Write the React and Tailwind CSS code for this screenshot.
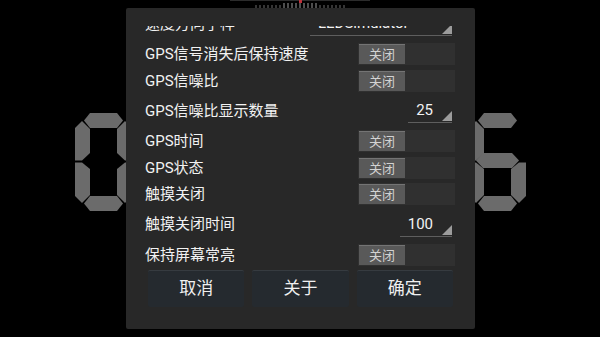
import React from "react";

const SEGMENTS = {
  a: "15,0 42,0 48,7.5 42,15 15,15 9,7.5",
  b: "57,15 50,8 42,16 42,40 50,47.5 57,47.5",
  c: "57,49.5 50,49.5 42,56 42,82 50,90 57,83",
  d: "15,83 42,83 48,90.5 42,98 15,98 9,90.5",
  e: "0,49.5 7,49.5 15,56 15,82 7,90 0,83",
  f: "0,15 7,8 15,16 15,40 7,47.5 0,47.5",
  g: "14,40 43,40 50,47.5 43,55 14,55 7,47.5",
};

const DIGITS = {
  0: ["a", "b", "c", "d", "e", "f"],
  6: ["a", "c", "d", "e", "f", "g"],
};

function Digit({ value, className }) {
  return (
    <svg className={className} width="57" height="98" viewBox="0 0 57 98">
      {DIGITS[value].map((s) => (
        <polygon key={s} points={SEGMENTS[s]} fill="#6b6b6b" />
      ))}
    </svg>
  );
}

function Ticks() {
  const ticks = [];
  for (let x = 256; x <= 344; x += 4) {
    const d = Math.abs(x - 300);
    ticks.push(
      <line key={x} x1={x} x2={x} y1={d < 20 ? 3 : 5} y2="8" stroke={d < 20 ? "#9a9a9a" : "#6a6a6a"} strokeWidth="1" />
    );
  }
  return (
    <svg className="absolute left-0 top-0" width="600" height="10">
      <rect x="230" y="0" width="140" height="1" fill="#2c2c2c" />
      {ticks}
      <rect x="299" y="0" width="3" height="3" fill="#c0303a" />
    </svg>
  );
}

function Toggle() {
  return (
    <div className="w-[97px] h-[22px] bg-[#303030] flex items-center pl-px">
      <div className="w-[46px] h-[20px] bg-[#595959] border-t border-[#747474] flex items-center justify-center text-[13px] leading-none text-[#d2d2d2]">
        关闭
      </div>
    </div>
  );
}

function ToggleRow({ label }) {
  return (
    <div className="flex items-center h-[26.5px] pl-[19px] pr-[20px]">
      <span className="flex-1 text-[15px] text-[#f2f2f2]">{label}</span>
      <Toggle />
    </div>
  );
}

function SpinnerRow({ label, value, width }) {
  return (
    <div className="flex items-center h-[34px] pl-[19px] pr-[23px]">
      <span className="flex-1 text-[15px] text-[#f2f2f2]">{label}</span>
      <div
        className={
          "relative h-[24px] flex items-center border-b border-[#5e5e5e] text-[15px] text-[#f2f2f2] " +
          (width ? "w-[142px] pl-[8px]" : "pl-[8px] pr-[19px]")
        }
      >
        {value}
        <svg className="absolute right-0 bottom-[1px]" width="10" height="10" viewBox="0 0 10 10">
          <polygon points="10,0 10,10 0,10" fill="#9c9c9c" />
        </svg>
      </div>
    </div>
  );
}

function DialogButton({ children }) {
  return (
    <button className="h-[37px] bg-[#252a2f] border-t border-[#363b40] rounded-[2px] text-[17px] text-[#f0f0f0]">
      {children}
    </button>
  );
}

export default function App() {
  return (
    <div className="relative w-[600px] h-[337px] bg-black overflow-hidden font-['Roboto','Noto_Sans_CJK_SC',sans-serif]">
      <Ticks />
      <Digit value={0} className="absolute left-[75px] top-[113px]" />
      <Digit value={6} className="absolute left-[469px] top-[113px]" />

      <div className="absolute left-[126px] top-[8px] w-[349px] h-[321px] bg-[#282828] rounded-[2px] flex flex-col pt-[18px]">
        <div className="h-[241px] overflow-hidden">
          <div className="-mt-[19px]">
            <SpinnerRow label="速度方向手样" value="LEDSimulator" width />
            <ToggleRow label="GPS信号消失后保持速度" />
            <ToggleRow label="GPS信噪比" />
            <SpinnerRow label="GPS信噪比显示数量" value="25" />
            <ToggleRow label="GPS时间" />
            <ToggleRow label="GPS状态" />
            <ToggleRow label="触摸关闭" />
            <SpinnerRow label="触摸关闭时间" value="100" />
            <ToggleRow label="保持屏幕常亮" />
          </div>
        </div>
        <div className="grid grid-cols-3 gap-2 px-[22px] mt-[3px]">
          <DialogButton>取消</DialogButton>
          <DialogButton>关于</DialogButton>
          <DialogButton>确定</DialogButton>
        </div>
      </div>
    </div>
  );
}
